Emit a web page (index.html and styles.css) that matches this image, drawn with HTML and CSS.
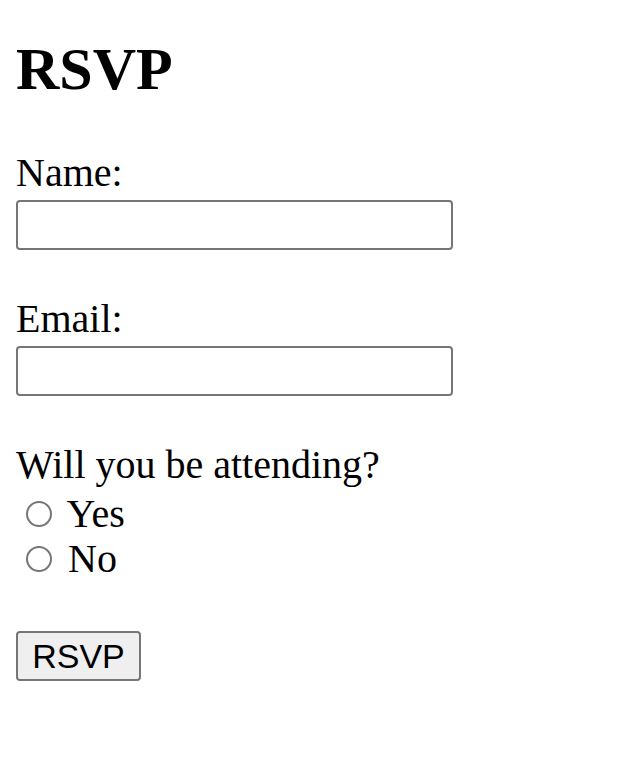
FILE: index.html
```html
<!DOCTYPE html>
<html lang="en">
<head>
<meta charset="utf-8">
<title>RSVP</title>
<link rel="stylesheet" href="styles.css">
</head>
<body>
<main class="page">
  <h1 class="title">RSVP</h1>
  <form class="form">
    <label class="label" for="name">Name:</label>
    <input class="text-input" type="text" id="name" name="name">
    <label class="label" for="email">Email:</label>
    <input class="text-input" type="email" id="email" name="email">
    <div class="label">Will you be attending?</div>
    <label class="option option-first"><input class="radio" type="radio" name="attending" value="yes"> Yes</label>
    <label class="option"><input class="radio" type="radio" name="attending" value="no"> No</label>
    <button class="submit" type="submit">RSVP</button>
  </form>
</main>
</body>
</html>
```
FILE: styles.css
```css
html, body {
  margin: 0;
  padding: 0;
  background: #ffffff;
}

.page {
  padding: 0 16px;
  font-family: "Liberation Serif", "Times New Roman", serif;
  color: #000000;
}

.title {
  margin: 34.5px 0 0;
  font-size: 60px;
  font-weight: bold;
  line-height: normal;
}

.form {
  display: flex;
  flex-direction: column;
  align-items: flex-start;
}

.label {
  margin-top: 45.5px;
  font-size: 40px;
  line-height: normal;
}

.text-input {
  margin: 3.5px 0 0;
  box-sizing: border-box;
  width: 437px;
  height: 50px;
  border: 2px solid #767676;
  border-radius: 4px;
  background: #ffffff;
  padding: 2px 4px;
  font-family: "Liberation Sans", Arial, sans-serif;
  font-size: 26px;
}

.option {
  display: block;
  font-size: 40px;
  line-height: 45px;
  height: 45px;
}

.option-first {
  margin-top: 3px;
}

.radio {
  -webkit-appearance: none;
  appearance: none;
  display: inline-block;
  box-sizing: border-box;
  width: 26px;
  height: 26px;
  margin: 6px 6px 0 10px;
  border: 2px solid #767676;
  border-radius: 50%;
  background: #ffffff;
  vertical-align: baseline;
}

.submit {
  margin-top: 50px;
  box-sizing: border-box;
  width: 125px;
  height: 50px;
  padding: 0 12px;
  border: 2px solid #767676;
  border-radius: 4px;
  background: #efefef;
  color: #000000;
  font-family: "Liberation Sans", Arial, sans-serif;
  font-size: 34px;
  line-height: 1;
}
```
